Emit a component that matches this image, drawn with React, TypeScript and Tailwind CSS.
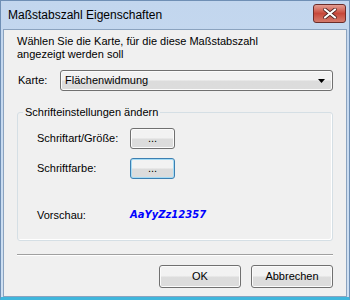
import React from 'react';

const ui = { fontFamily: '"Liberation Sans", Arial, sans-serif' };

const WinButton: React.FC<{ label: string; focused?: boolean; className?: string }> = ({ label, focused, className }) => (
  <button
    className={
      'flex items-center justify-center rounded-[3px] border text-[11px] text-black bg-gradient-to-b from-[#f2f2f2] from-45% to-[#dcdcdc] to-55% ' +
      (focused ? 'border-[#3c7fb1] shadow-[inset_0_0_0_1px_#a6dcf5] ' : 'border-[#707070] shadow-[inset_0_0_0_1px_#fbfbfb] ') +
      (className ?? '')
    }
    style={ui}
  >
    {label}
  </button>
);

const App: React.FC = () => {
  return (
    <div className="w-[350px] h-[300px] flex flex-col bg-gradient-to-b from-[#c2d6ee] to-[#cfe0f2] border border-[#6f8fb5] border-b-[3px] border-b-[#3fb6dc]" style={ui}>
      <div className="h-[28px] flex items-center justify-between pl-[7px] pr-[3px]">
        <span className="text-[12px] text-black">Maßstabszahl Eigenschaften</span>
        <div className="w-[33px] h-[19px] mt-[-4px] rounded-[3px] border border-[#6b2d2a] bg-gradient-to-b from-[#e39d92] via-[#c7483b] to-[#d47a6c] flex items-center justify-center">
          <svg width="14" height="11" viewBox="0 0 14 11">
            <path d="M2 1.5 L12 9.5 M12 1.5 L2 9.5" stroke="#4a2020" strokeWidth="3.6" strokeLinecap="round" />
            <path d="M2 1.5 L12 9.5 M12 1.5 L2 9.5" stroke="#ffffff" strokeWidth="2.2" strokeLinecap="round" />
          </svg>
        </div>
      </div>
      <div className="flex-1 mx-[2px] border border-[#8ba3bf] bg-[#f0f0f0] flex flex-col px-[13px] pt-[5px] text-[11px] text-black">
        <p className="leading-[13px]">
          Wählen Sie die Karte, für die diese Maßstabszahl
          <br />
          angezeigt werden soll
        </p>
        <div className="flex items-center mt-[9px]">
          <span className="w-[43px] pl-[1px]">Karte:</span>
          <div className="flex-1 h-[21px] rounded-[3px] border border-[#707070] bg-gradient-to-b from-[#f2f2f2] from-45% to-[#dcdcdc] to-55% flex items-center justify-between pl-[4px] pr-[6px] shadow-[inset_0_0_0_1px_#fbfbfb]">
            <span>Flächenwidmung</span>
            <svg width="8" height="4" viewBox="0 0 8 4">
              <path d="M0 0 H7 L3.5 4 Z" fill="#000" />
            </svg>
          </div>
        </div>
        <fieldset className="mt-[13px] h-[137px] border border-[#d5dfe5] rounded-[3px] pl-[19px] pr-[20px] pt-[7px] shadow-[inset_-1px_-1px_0_#fff]">
          <legend className="px-[2px] ml-[-14px]">Schrifteinstellungen ändern</legend>
          <div className="flex items-center">
            <span className="w-[93px]">Schriftart/Größe:</span>
            <WinButton label="..." className="w-[45px] h-[21px]" />
          </div>
          <div className="flex items-center mt-[9px]">
            <span className="w-[93px]">Schriftfarbe:</span>
            <WinButton label="..." focused className="w-[45px] h-[21px]" />
          </div>
          <div className="flex items-center mt-[28px]">
            <span className="w-[93px]">Vorschau:</span>
            <span className="text-[10px] font-bold italic text-[#0000ff]" style={{ fontFamily: '"DejaVu Sans", Verdana, sans-serif' }}>
              AaYyZz12357
            </span>
          </div>
        </fieldset>
        <div className="mt-[13px] border-t border-t-[#a0a0a0] border-b border-b-white" />
        <div className="flex justify-end gap-[10px] mt-[9px]">
          <WinButton label="OK" className="w-[82px] h-[23px]" />
          <WinButton label="Abbrechen" className="w-[82px] h-[23px]" />
        </div>
      </div>
    </div>
  );
};

export default App;
